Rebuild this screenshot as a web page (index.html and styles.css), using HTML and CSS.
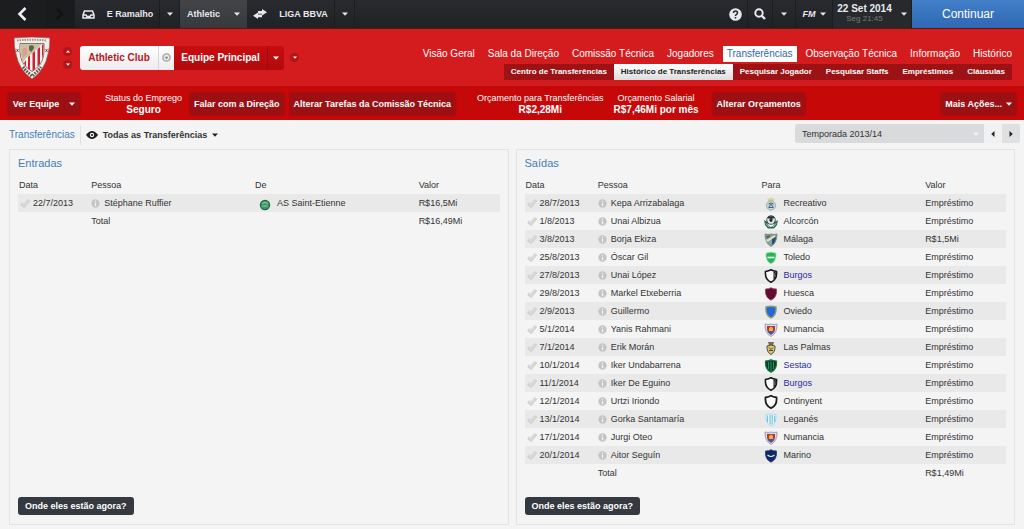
FILE: index.html
```html
<!DOCTYPE html>
<html lang="pt-BR">
<head>
  <meta charset="UTF-8">
  <meta name="viewport" content="width=device-width, initial-scale=1">
  <title>Athletic Club - Histórico de Transferências</title>
  <link rel="stylesheet" href="styles.css">
</head>
<body>
  <!-- icons and club crests -->
  <svg class="defs" width="0" height="0" aria-hidden="true">
    <symbol id="tick" viewBox="0 0 10 10">
      <path d="M1 5.500l3 2.500 5-6" fill="none" stroke="#cfcfcf" stroke-width="3"/>
      <path d="M1.500 5.500l2.500 2 4.500-5" fill="none" stroke="#e4e4e4" stroke-width="1"/>
    </symbol>
    <symbol id="info" viewBox="0 0 10 10">
      <circle cx="5" cy="5" r="4.600" fill="#c4c4c4"/>
      <path d="M5 2v1.500M5 4.500v3.500" stroke="#f4f4f4" stroke-width="1.400"/>
    </symbol>
    <symbol id="caret" viewBox="0 0 6 4"><path d="M0 .5h6L3 3.800z" fill="currentColor"/></symbol>
    <symbol id="etienne" viewBox="0 0 14 14">
      <circle cx="7" cy="8" r="4.600" fill="#3d9a66" stroke="#1d6a45" stroke-width="1.200"/>
      <path d="M4.500 6.500q2.500-2 5 0M4.500 9h5" stroke="#8fc9a5" stroke-width="1.200" fill="none"/>
    </symbol>
    <symbol id="recreativo" viewBox="0 0 14 14">
      <path d="M3.500 1l1.500 1L7 .5 9 2l1.500-1-.5 3.500H4z" fill="#e3cf85"/>
      <circle cx="7" cy="8.500" r="4.600" fill="#c7d5d8" stroke="#8aa6b2" stroke-width=".8"/>
      <path d="M4.500 7q2.500-2 5 0M5 10l2-3 2 3M4.500 10.500h5" stroke="#42647b" fill="none"/>
    </symbol>
    <symbol id="alcorcon" viewBox="0 0 14 14">
      <path d="M0 5l3 2 2 4 2 1 2-1 2-4 3-2-1 5-3 3.500H4L1 10z" fill="#2b6b55"/>
      <path d="M2 8.500l3 3.500M12 8.500L9 12" stroke="#e5eee9" stroke-width=".8"/>
      <circle cx="7" cy="5" r="4.300" fill="#e8ecea" stroke="#27353a" stroke-width=".8"/>
      <path d="M5.500 4.500L7 3.300l1.500 1.200L8 6.500H6zM3.500 2.500l1.500-1h4l1.500 1-1 .8H4.500zM3 6l1 2.200M11 6l-1 2.200" fill="#222d33" stroke="#222d33" stroke-width=".5"/>
    </symbol>
    <symbol id="malaga" viewBox="0 0 14 14">
      <path d="M1 1q3 1 6 0 3 1 6 0 0 9-6 12.500Q1 10 1 1z" fill="#7fa5a8" stroke="#78776a" stroke-width=".8"/>
      <path d="M2 7l9-5v2L3.500 9z" fill="#e2dfbf"/>
      <path d="M8 6l4-2q0 5-4 8z" fill="#28506b"/>
      <path d="M2 3l4-1v2L3 6z" fill="#55704f"/>
    </symbol>
    <symbol id="toledo" viewBox="0 0 14 14">
      <path d="M2 2q5-2 10 0 1 8-5 11Q1 10 2 2z" fill="#29b457" stroke="#bfe8ca" stroke-width=".8"/>
      <path d="M3.500 6.500h7" stroke="#f3fff5" stroke-width="1.600"/>
    </symbol>
    <symbol id="burgos" viewBox="0 0 14 14">
      <path d="M1.500 2.500Q5 2 7 .8q2 1.200 5.500 1.700.8 8-5.500 10.700Q.7 10.500 1.500 2.500z" fill="#fbfbfb" stroke="#151a1e" stroke-width="1.600"/>
      <path d="M9.500 2.500l2.500 1q.3 5-2.500 7z" fill="#151a1e"/>
      <path d="M10.800 4v4" stroke="#aaa" stroke-width=".7"/>
    </symbol>
    <symbol id="ontinyent" viewBox="0 0 14 14">
      <path d="M1.500 2.500Q5 2 7 .8q2 1.200 5.500 1.700.8 8-5.500 10.700Q.7 10.500 1.500 2.500z" fill="#fbfbfb" stroke="#1c1e20" stroke-width="1.800"/>
    </symbol>
    <symbol id="huesca" viewBox="0 0 14 14">
      <path d="M1.500 2Q5 2 7 .8 9 2 12.500 2q.8 8.500-5.500 11.200Q.7 10.500 1.500 2z" fill="#650a31" stroke="#8f3c5b" stroke-width=".8"/>
    </symbol>
    <symbol id="oviedo" viewBox="0 0 14 14">
      <path d="M2 2q5-1.500 10 0 .8 8-5 11Q1.200 10 2 2z" fill="#2267d8" stroke="#8e9b77" stroke-width="1.400"/>
    </symbol>
    <symbol id="numancia" viewBox="0 0 14 14">
      <path d="M1 1q3 1 6 0 3 1 6 0 .5 9-6 12.500Q.5 10 1 1z" fill="#d5dbe7" stroke="#8790a6" stroke-width=".8"/>
      <path d="M3 3h8v4l-1.500 3L7 11.500 4.500 10 3 7z" fill="#ba3343"/>
      <path d="M5 8V5l2-1.500L9 5v3z" fill="#e6b53f"/>
      <path d="M3.500 8.500h7L7 12z" fill="#3e5b9e"/>
    </symbol>
    <symbol id="palmas" viewBox="0 0 14 14">
      <path d="M4 1h6L9 4.500H5z" fill="#786a4d"/>
      <path d="M3 5q4-2 8 0 .5 6-4 8.500Q2.500 11 3 5z" fill="#e5c652" stroke="#45515d" stroke-width="1"/>
      <path d="M5 6.500l2 2 2-2M5 9.500h4" stroke="#334b75" fill="none"/>
    </symbol>
    <symbol id="sestao" viewBox="0 0 14 14">
      <path d="M1.500 2Q5 2 7 .8 9 2 12.500 2q.8 8.500-5.500 11.200Q.7 10.500 1.500 2z" fill="#12392f" stroke="#18793f" stroke-width="1.200"/>
      <path d="M4.500 3v7M7 2.500V12M9.500 3v7" stroke="#1c9a55"/>
    </symbol>
    <symbol id="leganes" viewBox="0 0 14 14">
      <path d="M2 1.500q5-1 10 0 1 8.500-5 11.500Q1 10 2 1.500z" fill="#f5fbfd" stroke="#9fd3ea" stroke-width=".8"/>
      <path d="M3.500 2.500v6.500M6 2v9.500M8.200 2v9.500M10.700 2.500v6.500" stroke="#72c2e6" stroke-width="1.200"/>
    </symbol>
    <symbol id="marino" viewBox="0 0 14 14">
      <path d="M1.500 2Q5 2 7 .8 9 2 12.500 2q.8 8.500-5.500 11.200Q.7 10.500 1.500 2z" fill="#10295e" stroke="#1e3c77" stroke-width=".8"/>
      <path d="M3.500 6q3.500 3 7 0" stroke="#dce7f5" stroke-width="1.200" fill="none"/>
    </symbol>
  </svg>

  <header class="topbar">
    <button class="cell back" aria-label="Voltar">
      <svg width="10" height="14" viewBox="0 0 10 14"><path d="M8.500 1L2.500 7l6 6" fill="none" stroke="#eef1f6" stroke-width="2.600"/></svg>
    </button>
    <button class="cell forward" aria-label="Avançar">
      <svg width="10" height="14" viewBox="0 0 10 14"><path d="M2 2l5 5-5 5" fill="none" stroke="#101113" stroke-width="2"/></svg>
    </button>
    <button class="cell inbox" aria-label="Caixa de entrada">
      <svg width="13" height="9" viewBox="0 0 13 9"><path d="M2.500 1h8L12 5v3H1V5zM1 5h3l1 1.500h3L9 5h3" fill="none" stroke="#e6e9ef" stroke-width="1.500"/></svg>
    </button>
    <button class="cell manager">E Ramalho</button>
    <button class="cell drop" aria-label="Menu do treinador"><svg class="caret"><use href="#caret"/></svg></button>
    <button class="cell club active">Athletic</button>
    <button class="cell drop active" aria-label="Menu do clube"><svg class="caret"><use href="#caret"/></svg></button>
    <button class="cell swap" aria-label="Trocar competição">
      <svg width="14" height="10" viewBox="0 0 14 10"><path d="M9 0l5 3.300-5 3.200V4.800H5V2h4zM5 3.500L0 6.700 5 10V8.200h4V5.500H5z" fill="#e6e9ef"/></svg>
    </button>
    <button class="cell league">LIGA BBVA</button>
    <button class="cell drop" aria-label="Menu da liga"><svg class="caret"><use href="#caret"/></svg></button>

    <div class="tools">
      <button class="cell tool" aria-label="Ajuda">
        <svg width="13" height="13" viewBox="0 0 13 13"><circle cx="6.500" cy="6.500" r="6.300" fill="#e6e9ef"/><path d="M4.500 5q0-2 2-2t2 1.800q0 1-1 1.600-1 .5-1 1.600M6.500 9v1.500" fill="none" stroke="#232528" stroke-width="1.500"/></svg>
      </button>
      <button class="cell tool" aria-label="Pesquisar">
        <svg width="12" height="12" viewBox="0 0 12 12"><circle cx="5" cy="5" r="3.700" fill="none" stroke="#e6e9ef" stroke-width="2"/><path d="M7.500 7.500L11 11" stroke="#e6e9ef" stroke-width="2.400"/></svg>
      </button>
      <button class="cell drop tool-drop" aria-label="Opções de pesquisa"><svg class="caret"><use href="#caret"/></svg></button>
      <button class="cell fm">FM <svg class="caret"><use href="#caret"/></svg></button>
      <button class="cell date">
        <span><strong>22 Set 2014</strong><small>Seg 21:45</small></span>
        <svg class="caret"><use href="#caret"/></svg>
      </button>
      <button class="continue">Continuar</button>
    </div>
  </header>

  <section class="club-header">
    <svg class="crest" width="36" height="42" viewBox="0 0 36 42" role="img" aria-label="Athletic Club">
      <path d="M0 1q18-2 36 0 0 9-2 16-3 16-16 25Q5 33 2 17 0 10 0 1z" fill="#f0eeea" stroke="#8a6a60" stroke-width=".8"/>
      <path d="M3 3.500q15-1.500 30 0" stroke="#9b948b" stroke-width="2" stroke-dasharray="1.500 1" fill="none"/>
      <path d="M6 6.500h24q1 14-4 21-3 4-8 7-5-3-8-7Q5 21 6 6.500z" fill="#f6f2ee" stroke="#765247" stroke-width=".8"/>
      <path d="M10 26l2-3v7zM14 20l2-2v15l-2-1.500zM18.500 16l2.500-2v18l-2.500 2zM23.500 12l2.500-2v17l-2.500 2.500zM28 8l1.500-1q0 11-1.500 15z" fill="#cf2136"/>
      <path d="M6.500 7H28q-7 7-12 11-5 3-7 7Q6 20 6.500 7z" fill="#cdbfa0"/>
      <path d="M15 9q5-2 5 2l-2.500 4-2.500-2z" fill="#4f6b4c"/>
      <path d="M8 13q3-4 5-1v5l-4 4z" fill="#d8a090"/>
      <path d="M2.500 12l2 3M4.500 12l-2 3M31.500 12l2 3M33.500 12l-2 3" stroke="#6b3030" stroke-width=".8"/>
      <path d="M9 30q4 5 9 9 5-4 9-9" stroke="#554e49" stroke-width="3" stroke-dasharray="1.500 1.200" fill="none"/>
    </svg>
    <div class="spinner">
      <button aria-label="Clube anterior"><svg class="caret up"><use href="#caret"/></svg></button>
      <button aria-label="Próximo clube"><svg class="caret"><use href="#caret"/></svg></button>
    </div>
    <div class="team-picker">
      <button class="team">Athletic Club</button>
      <button class="team-drop" aria-label="Escolher clube">
        <svg width="9" height="9" viewBox="0 0 9 9"><circle cx="4.500" cy="4.500" r="3.600" fill="#eee" stroke="#a3a3a3" stroke-width="1.400"/><path d="M2.500 3.800h4l-2 2.600z" fill="#888"/></svg>
      </button>
      <button class="squad">Equipe Principal</button>
      <button class="squad-drop" aria-label="Escolher equipe"><svg class="caret"><use href="#caret"/></svg></button>
    </div>
    <button class="round" aria-label="Mais equipes"><svg class="caret"><use href="#caret"/></svg></button>

    <div class="navs">
      <nav class="nav">
        <a href="#">Visão Geral</a>
        <a href="#">Sala da Direção</a>
        <a href="#">Comissão Técnica</a>
        <a href="#">Jogadores</a>
        <a href="#" class="current">Transferências</a>
        <a href="#">Observação Técnica</a>
        <a href="#">Informação</a>
        <a href="#">Histórico</a>
      </nav>
      <nav class="subnav">
        <a href="#">Centro de Transferências</a>
        <a href="#" class="current">Histórico de Transferências</a>
        <a href="#">Pesquisar Jogador</a>
        <a href="#">Pesquisar Staffs</a>
        <a href="#">Empréstimos</a>
        <a href="#">Cláusulas</a>
      </nav>
    </div>
  </section>

  <section class="actions">
    <button class="action view">Ver Equipe <svg class="caret"><use href="#caret"/></svg></button>
    <div class="stat status"><span>Status do Emprego</span><strong>Seguro</strong></div>
    <button class="action">Falar com a Direção</button>
    <button class="action">Alterar Tarefas da Comissão Técnica</button>
    <div class="stat budget"><span>Orçamento para Transferências</span><strong>R$2,28Mi</strong></div>
    <div class="stat wages"><span>Orçamento Salarial</span><strong>R$7,46Mi por mês</strong></div>
    <button class="action">Alterar Orçamentos</button>
    <button class="action more">Mais Ações... <svg class="caret"><use href="#caret"/></svg></button>
  </section>

  <main>
    <div class="filters">
      <h1>Transferências</h1>
      <button class="filter">
        <svg width="12" height="8" viewBox="0 0 12 8"><path d="M0 4q6-8 12 0-6 8-12 0z" fill="#1c1d1f"/><circle cx="6" cy="4" r="2.200" fill="#f4f4f4"/><circle cx="6" cy="4" r="1.100" fill="#1c1d1f"/></svg>
        Todas as Transferências
        <svg class="caret"><use href="#caret"/></svg>
      </button>
      <div class="season">
        <select aria-label="Temporada">
          <option>Temporada 2013/14</option>
        </select>
        <svg class="caret"><use href="#caret"/></svg>
        <button class="prev" aria-label="Temporada anterior"><svg class="caret left"><use href="#caret"/></svg></button>
        <button class="next" aria-label="Próxima temporada"><svg class="caret right"><use href="#caret"/></svg></button>
      </div>
    </div>

    <div class="panels">
      <section class="panel">
        <h2>Entradas</h2>
        <table>
          <thead>
            <tr><th class="c-date">Data</th><th class="c-name">Pessoa</th><th class="c-club">De</th><th>Valor</th></tr>
          </thead>
          <tbody>
            <tr><td><svg class="tick"><use href="#tick"/></svg>22/7/2013</td><td><svg class="info"><use href="#info"/></svg>Stéphane Ruffier</td><td><svg class="badge"><use href="#etienne"/></svg>AS Saint-Etienne</td><td>R$16,5Mi</td></tr>
          </tbody>
          <tfoot>
            <tr><td></td><td>Total</td><td></td><td>R$16,49Mi</td></tr>
          </tfoot>
        </table>
        <button class="where">Onde eles estão agora?</button>
      </section>

      <section class="panel">
        <h2>Saídas</h2>
        <table>
          <thead>
            <tr><th class="c-date">Data</th><th class="c-name">Pessoa</th><th class="c-club">Para</th><th>Valor</th></tr>
          </thead>
          <tbody>
            <tr><td><svg class="tick"><use href="#tick"/></svg>28/7/2013</td><td><svg class="info"><use href="#info"/></svg>Kepa Arrizabalaga</td><td><svg class="badge"><use href="#recreativo"/></svg>Recreativo</td><td>Empréstimo</td></tr>
            <tr><td><svg class="tick"><use href="#tick"/></svg>1/8/2013</td><td><svg class="info"><use href="#info"/></svg>Unai Albizua</td><td><svg class="badge"><use href="#alcorcon"/></svg>Alcorcón</td><td>Empréstimo</td></tr>
            <tr><td><svg class="tick"><use href="#tick"/></svg>3/8/2013</td><td><svg class="info"><use href="#info"/></svg>Borja Ekiza</td><td><svg class="badge"><use href="#malaga"/></svg>Málaga</td><td>R$1,5Mi</td></tr>
            <tr><td><svg class="tick"><use href="#tick"/></svg>25/8/2013</td><td><svg class="info"><use href="#info"/></svg>Óscar Gil</td><td><svg class="badge"><use href="#toledo"/></svg>Toledo</td><td>Empréstimo</td></tr>
            <tr><td><svg class="tick"><use href="#tick"/></svg>27/8/2013</td><td><svg class="info"><use href="#info"/></svg>Unai López</td><td><svg class="badge"><use href="#burgos"/></svg><a href="#">Burgos</a></td><td>Empréstimo</td></tr>
            <tr><td><svg class="tick"><use href="#tick"/></svg>29/8/2013</td><td><svg class="info"><use href="#info"/></svg>Markel Etxeberria</td><td><svg class="badge"><use href="#huesca"/></svg>Huesca</td><td>Empréstimo</td></tr>
            <tr><td><svg class="tick"><use href="#tick"/></svg>2/9/2013</td><td><svg class="info"><use href="#info"/></svg>Guillermo</td><td><svg class="badge"><use href="#oviedo"/></svg>Oviedo</td><td>Empréstimo</td></tr>
            <tr><td><svg class="tick"><use href="#tick"/></svg>5/1/2014</td><td><svg class="info"><use href="#info"/></svg>Yanis Rahmani</td><td><svg class="badge"><use href="#numancia"/></svg>Numancia</td><td>Empréstimo</td></tr>
            <tr><td><svg class="tick"><use href="#tick"/></svg>7/1/2014</td><td><svg class="info"><use href="#info"/></svg>Erik Morán</td><td><svg class="badge"><use href="#palmas"/></svg>Las Palmas</td><td>Empréstimo</td></tr>
            <tr><td><svg class="tick"><use href="#tick"/></svg>10/1/2014</td><td><svg class="info"><use href="#info"/></svg>Iker Undabarrena</td><td><svg class="badge"><use href="#sestao"/></svg><a href="#">Sestao</a></td><td>Empréstimo</td></tr>
            <tr><td><svg class="tick"><use href="#tick"/></svg>11/1/2014</td><td><svg class="info"><use href="#info"/></svg>Iker De Eguino</td><td><svg class="badge"><use href="#burgos"/></svg><a href="#">Burgos</a></td><td>Empréstimo</td></tr>
            <tr><td><svg class="tick"><use href="#tick"/></svg>12/1/2014</td><td><svg class="info"><use href="#info"/></svg>Urtzi Iriondo</td><td><svg class="badge"><use href="#ontinyent"/></svg>Ontinyent</td><td>Empréstimo</td></tr>
            <tr><td><svg class="tick"><use href="#tick"/></svg>13/1/2014</td><td><svg class="info"><use href="#info"/></svg>Gorka Santamaría</td><td><svg class="badge"><use href="#leganes"/></svg>Leganés</td><td>Empréstimo</td></tr>
            <tr><td><svg class="tick"><use href="#tick"/></svg>17/1/2014</td><td><svg class="info"><use href="#info"/></svg>Jurgi Oteo</td><td><svg class="badge"><use href="#numancia"/></svg>Numancia</td><td>Empréstimo</td></tr>
            <tr><td><svg class="tick"><use href="#tick"/></svg>20/1/2014</td><td><svg class="info"><use href="#info"/></svg>Aitor Seguín</td><td><svg class="badge"><use href="#marino"/></svg>Marino</td><td>Empréstimo</td></tr>
          </tbody>
          <tfoot>
            <tr><td></td><td>Total</td><td></td><td>R$1,49Mi</td></tr>
          </tfoot>
        </table>
        <button class="where">Onde eles estão agora?</button>
      </section>
    </div>
  </main>
</body>
</html>
```

FILE: styles.css
```css
* { box-sizing: border-box; }
body {
  margin: 0;
  min-height: 100vh;
  display: flex;
  flex-direction: column;
  background: #f4f4f4;
  color: #333;
  font: 9px/12px "Liberation Sans", Arial, sans-serif;
}
button, select { font: inherit; color: inherit; border: 0; margin: 0; padding: 0; background: none; white-space: nowrap; }
button { display: flex; align-items: center; justify-content: center; cursor: pointer; }
a { text-decoration: none; }
.defs { position: absolute; }
svg { flex: none; }
.caret { width: 6px; height: 4px; }
.up { transform: rotate(180deg); }
.left { transform: rotate(90deg); }
.right { transform: rotate(-90deg); }

/* top bar */
.topbar { display: flex; height: 29px; background: linear-gradient(#292b2e, #1f2124); border-bottom: 1px solid #5c1416; color: #e6e9ef; font-weight: bold; }
.cell { border-right: 1px solid #1b1d1f; }
.back { width: 45px; background: #1b1d1f; }
.forward { width: 30px; background: #191b1d; }
.inbox { width: 26px; border: 0; }
.manager { width: 59px; }
.drop { width: 20px; }
.club { width: 47px; border: 0; }
.cell.active { background: linear-gradient(#424447, #37393c); border: 0; }
.swap { width: 26px; border: 0; }
.league { width: 62px; }
.tools { display: flex; margin-left: auto; }
.tool { width: 25px; }
.tool-drop { width: 23px; }
.fm { width: 37px; gap: 4px; font-style: italic; }
.date { width: 79px; gap: 9px; background: #27292c; }
.date strong, .date small { display: block; line-height: 10px; }
.date strong { font-size: 10px; }
.date small { font-size: 8px; font-weight: normal; color: #77797c; }
.continue { width: 112px; background: linear-gradient(#4380c9, #2f67b3); color: #fff; font-size: 12px; font-weight: normal; }

/* club header */
.club-header { display: flex; align-items: center; height: 57px; padding: 0 12px 0 14px; background: #d41b1d; color: #fff; }
.spinner { display: flex; flex-direction: column; gap: 4px; margin: 0 8px 0 13px; }
.spinner button, .round { width: 9px; height: 9px; border-radius: 50%; background: #b31517; }
.spinner .caret, .round .caret { width: 4px; height: 3px; }
.team-picker { display: flex; height: 24px; border-radius: 3px; overflow: hidden; font-size: 10px; font-weight: bold; }
.team, .team-drop { background: linear-gradient(#fff, #ececec); color: #b9161d; }
.team { width: 78px; }
.team-drop { width: 16px; border-left: 1px solid #d6d6d6; }
.squad, .squad-drop { background: linear-gradient(#c90c0f, #b00b0d); }
.squad { width: 93px; }
.squad-drop { width: 17px; border-left: 1px solid #a00a0c; }
.round { margin-left: 6px; }
.navs { display: flex; flex-direction: column; align-items: flex-end; margin-left: auto; padding-top: 10px; }
.nav { display: flex; gap: 5px; font-size: 10px; margin-right: -4px; }
.nav a { padding: 0 4px; line-height: 16px; color: #fff; }
.nav .current { background: #fff; color: #2f68b0; }
.subnav { display: flex; margin-top: 2px; font-size: 8px; font-weight: bold; background: #9d1214; }
.subnav a { padding: 0 7px; line-height: 16px; color: #fff; }
.subnav .current { background: linear-gradient(#fff, #ddd); color: #222; }

/* action bar */
.actions { display: flex; align-items: center; height: 34px; padding: 0 8px; background: #c70809; color: #fff; border-top: 1px solid #bd0c0e; }
.action { height: 22px; padding: 0 4px; border-radius: 2px; background: #9c1013; box-shadow: 0 0 2px #7d0b0d; font-weight: bold; }
.action + .action { margin-left: 6px; }
.view { width: 72px; gap: 10px; }
.stat { display: flex; flex-direction: column; align-items: center; justify-content: center; height: 33px; line-height: 11px; white-space: nowrap; }
.stat strong { font-size: 10px; }
.status, .budget { padding-left: 12px; border-left: 1px solid #b80c0e; }
.status { margin: 0 8px 0 12px; }
.budget { margin: 0 10px 0 9px; }
.wages { margin-right: 14px; }
.actions .more { margin-left: auto; gap: 4px; }

/* content */
main { display: flex; flex-direction: column; flex: 1; padding: 0 9px 4px; }
.filters { display: flex; align-items: center; height: 29px; }
h1, h2 { margin: 0; font-weight: normal; color: #477db8; }
h1 { font-size: 10px; line-height: 20px; padding-right: 5px; border-right: 1px solid #e2e2e2; }
.filter { gap: 5px; margin-left: 5px; font-weight: bold; }
.filter .caret { color: #222; }
.season { display: flex; align-items: center; width: 225px; height: 19px; margin: -2px -5px 0 auto; border-radius: 3px; overflow: hidden; background: #d9dadc; }
.season select { flex: 1; padding: 0 7px; appearance: none; background: none; }
.season > .caret { margin-right: 5px; color: #f4f4f4; }
.season button { width: 18px; height: 19px; color: #222; }
.prev { background: #f1f1f1; }
.next { background: #dfe0e1; }

.panels { display: flex; flex: 1; gap: 7px; }
.panel { display: flex; flex-direction: column; flex: 1; padding: 6px 8px 9px; border: 1px solid #e2e3e6; }
h2 { font-size: 11px; line-height: 14px; }
table { width: 100%; table-layout: fixed; border-collapse: collapse; margin: 6px 0 12px; }
th, td { height: 18px; padding: 0 0 0 1px; text-align: left; font-weight: normal; white-space: nowrap; }
tbody tr:nth-child(odd) { background: #e9e9e9; }
td svg { vertical-align: middle; }
td a { color: #2b2ba0; }
.c-date { width: 15%; }
.c-name, .c-club { width: 34%; }
.tick { width: 10px; height: 10px; margin: -2px 3px 0 1px; }
.info { width: 9px; height: 9px; margin: -1px 4px 0 0; }
.badge { width: 14px; height: 14px; margin: -2px 5px -2px 3px; }
.where { align-self: flex-start; margin-top: auto; height: 18px; padding: 0 7px; border-radius: 3px; background: #353940; color: #fff; font-weight: bold; }
```
